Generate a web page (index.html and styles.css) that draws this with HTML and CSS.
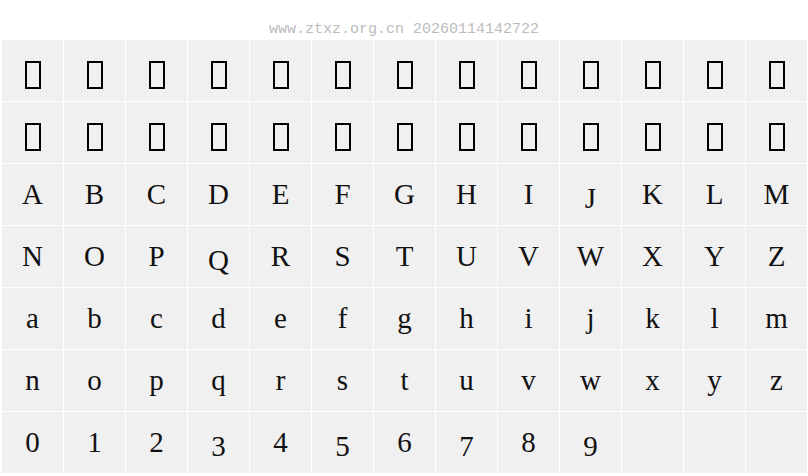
FILE: index.html
```html
<!DOCTYPE html>
<html>
<head>
<meta charset="utf-8">
<link rel="stylesheet" href="styles.css">
</head>
<body>
<div class="header">www.ztxz.org.cn 20260114142722</div>
<div class="grid">
<div class="cell"><span class="tofu"></span></div><div class="cell"><span class="tofu"></span></div><div class="cell"><span class="tofu"></span></div><div class="cell"><span class="tofu"></span></div><div class="cell"><span class="tofu"></span></div><div class="cell"><span class="tofu"></span></div><div class="cell"><span class="tofu"></span></div><div class="cell"><span class="tofu"></span></div><div class="cell"><span class="tofu"></span></div><div class="cell"><span class="tofu"></span></div><div class="cell"><span class="tofu"></span></div><div class="cell"><span class="tofu"></span></div><div class="cell"><span class="tofu"></span></div>
<div class="cell"><span class="tofu"></span></div><div class="cell"><span class="tofu"></span></div><div class="cell"><span class="tofu"></span></div><div class="cell"><span class="tofu"></span></div><div class="cell"><span class="tofu"></span></div><div class="cell"><span class="tofu"></span></div><div class="cell"><span class="tofu"></span></div><div class="cell"><span class="tofu"></span></div><div class="cell"><span class="tofu"></span></div><div class="cell"><span class="tofu"></span></div><div class="cell"><span class="tofu"></span></div><div class="cell"><span class="tofu"></span></div><div class="cell"><span class="tofu"></span></div>
<div class="cell">A</div><div class="cell">B</div><div class="cell">C</div><div class="cell">D</div><div class="cell">E</div><div class="cell">F</div><div class="cell">G</div><div class="cell">H</div><div class="cell">I</div><div class="cell"><span class="drop">J</span></div><div class="cell">K</div><div class="cell">L</div><div class="cell">M</div>
<div class="cell">N</div><div class="cell">O</div><div class="cell">P</div><div class="cell"><span class="drop">Q</span></div><div class="cell">R</div><div class="cell">S</div><div class="cell">T</div><div class="cell">U</div><div class="cell">V</div><div class="cell">W</div><div class="cell">X</div><div class="cell">Y</div><div class="cell">Z</div>
<div class="cell">a</div><div class="cell">b</div><div class="cell">c</div><div class="cell">d</div><div class="cell">e</div><div class="cell">f</div><div class="cell">g</div><div class="cell">h</div><div class="cell">i</div><div class="cell">j</div><div class="cell">k</div><div class="cell">l</div><div class="cell">m</div>
<div class="cell">n</div><div class="cell">o</div><div class="cell">p</div><div class="cell">q</div><div class="cell">r</div><div class="cell">s</div><div class="cell">t</div><div class="cell">u</div><div class="cell">v</div><div class="cell">w</div><div class="cell">x</div><div class="cell">y</div><div class="cell">z</div>
<div class="cell">0</div><div class="cell">1</div><div class="cell">2</div><div class="cell"><span class="drop">3</span></div><div class="cell">4</div><div class="cell"><span class="drop">5</span></div><div class="cell">6</div><div class="cell"><span class="drop">7</span></div><div class="cell">8</div><div class="cell"><span class="drop">9</span></div><div class="cell"></div><div class="cell"></div><div class="cell"></div>
</div>
</body>
</html>
```
FILE: styles.css
```css
html, body {
  margin: 0;
  padding: 0;
  background: #ffffff;
}

.header {
  height: 40px;
  box-sizing: border-box;
  padding-top: 21px;
  font-family: "Liberation Mono", monospace;
  font-size: 15px;
  line-height: 17px;
  color: #bcbcbc;
  text-align: center;
  white-space: nowrap;
}

.grid {
  display: grid;
  grid-template-columns: repeat(13, 61px);
  grid-auto-rows: 61px;
  gap: 1px;
  margin-left: 2px;
}

.cell {
  background: #f0f0f0;
  text-align: center;
  font-family: "Liberation Serif", serif;
  font-size: 29px;
  line-height: 61px;
  color: #111111;
}

.drop {
  vertical-align: -4px;
}

.tofu {
  display: inline-block;
  width: 12px;
  height: 24px;
  border: 2px solid #000000;
  vertical-align: -9px;
}
```
